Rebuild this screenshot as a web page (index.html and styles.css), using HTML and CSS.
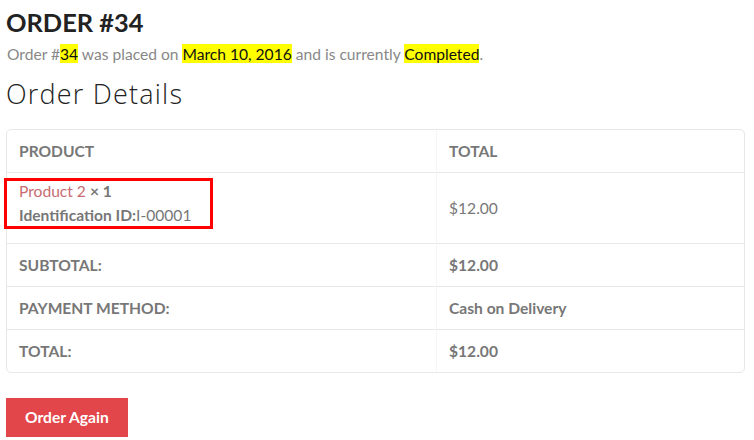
FILE: index.html
```html
<!DOCTYPE html>
<html>
<head>
<meta charset="utf-8">
<link rel="stylesheet" href="styles.css">
</head>
<body>
<div class="page">
  <h1 class="title">ORDER #34</h1>
  <p class="intro">Order #<mark>34</mark> was placed on <mark>March 10, 2016</mark> and is currently <mark>Completed</mark>.</p>
  <h2 class="subtitle">Order Details</h2>
  <div class="table-wrap">
    <table class="details">
      <thead>
        <tr><th class="col1">PRODUCT</th><th class="col2">TOTAL</th></tr>
      </thead>
      <tbody>
        <tr class="item">
          <td class="col1 item-cell">
            <div class="item-name"><a class="plink" href="#">Product 2</a> <strong>× 1</strong></div>
            <div class="item-meta"><strong>Identification ID:</strong>I-00001</div>
          </td>
          <td class="col2">$12.00</td>
        </tr>
      </tbody>
      <tfoot>
        <tr><th class="col1">SUBTOTAL:</th><td class="col2 strong">$12.00</td></tr>
        <tr><th class="col1">PAYMENT METHOD:</th><td class="col2 strong">Cash on Delivery</td></tr>
        <tr><th class="col1">TOTAL:</th><td class="col2 strong">$12.00</td></tr>
      </tfoot>
    </table>
    <div class="annot"></div>
  </div>
  <a class="btn" href="#">Order Again</a>
</div>
</body>
</html>
```
FILE: styles.css
```css
html, body { margin: 0; padding: 0; background: #fff; }
body { font-family: Lato, "Open Sans", sans-serif; color: #777; }
.page { padding: 0 9px 0 6px; }
.title { margin: 0; padding-top: 7px; font-size: 25.4px; font-weight: 700; color: #222; line-height: 30px; }
.intro { margin: 6px 0 0 1px; font-size: 15.6px; line-height: 22px; color: #888; }
.intro mark { background: #ff0; color: #111; padding: 1px 0 0; }
.subtitle { margin: 11px 0 0 0; font-family: "Open Sans", Lato, sans-serif; font-size: 27px; font-weight: 300; letter-spacing: 1.2px; color: #222; line-height: 36px; }
.table-wrap { position: relative; margin-top: 17px; }
.details { width: 100%; border-collapse: separate; border-spacing: 0; border: 1px solid #e8e8e8; border-radius: 5px; font-size: 15.6px; }
.details th, .details td { text-align: left; padding: 0 12px; height: 42px; border-top: 1px solid #e8e8e8; color: #777; vertical-align: middle; }
.details thead th { border-top: 0; font-weight: 700; }
.details .col1 { width: 405px; border-right: 1px solid #f6f6f6; }
.details tfoot th { font-weight: 700; }
.details .strong { font-weight: 700; }
.item td { height: 70px; }
.details .item-cell { vertical-align: top; padding-top: 6px; height: 64px; }
.item-name, .item-meta { line-height: 24px; }
.plink { color: #c96b71; text-decoration: none; }
.item strong { font-weight: 700; }
.annot { position: absolute; left: -2px; top: 49px; width: 203px; height: 45px; border: 3px solid #f00; }
.btn { display: inline-block; margin-top: 25px; background: #e2464a; color: #fff; font-weight: 700; font-size: 15.6px; text-decoration: none; padding: 0 19px; height: 39px; line-height: 39px; }
```
